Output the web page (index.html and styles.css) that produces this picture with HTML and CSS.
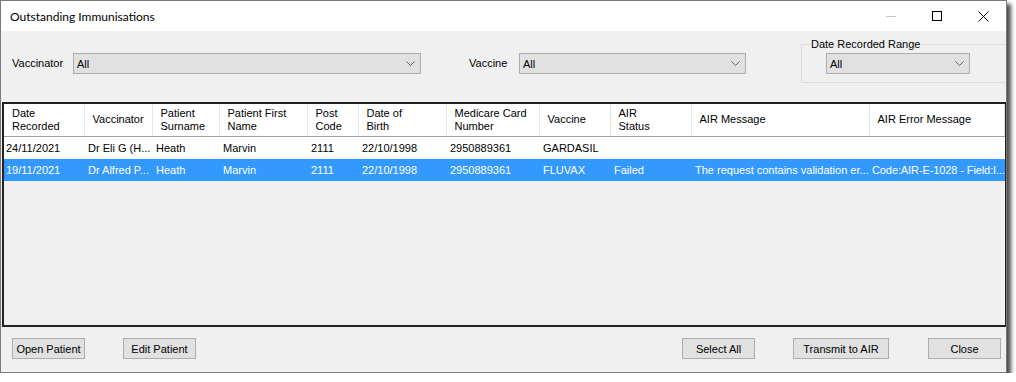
FILE: index.html
```html
<!DOCTYPE html>
<html lang="en">
<head>
    <meta charset="UTF-8">
    <title>Outstanding Immunisations</title>
    <link rel="stylesheet" href="styles.css">
</head>
<body>
    <div class="window">
        <div class="titlebar">
            <span class="title">Outstanding Immunisations</span>
            <div class="controls">
                <div class="ctl"><svg width="10" height="10" viewBox="0 0 10 10"><path d="M0 5.5H10" stroke="#c4c4c4" stroke-width="1"/></svg></div>
                <div class="ctl"><svg width="10" height="10" viewBox="0 0 10 10"><rect x="0.5" y="0.5" width="9" height="9" fill="none" stroke="#000" stroke-width="1"/></svg></div>
                <div class="ctl"><svg width="11" height="11" viewBox="0 0 11 11"><path d="M0.5 0.5L10.5 10.5M10.5 0.5L0.5 10.5" stroke="#000" stroke-width="1"/></svg></div>
            </div>
        </div>

        <div class="filters">
            <label class="lbl lbl-vaccinator">Vaccinator</label>
            <div class="combo combo-vaccinator">
                <span>All</span>
                <svg class="chev" width="9" height="5" viewBox="0 0 9 5"><path d="M0.5 0.5L4.5 4.5L8.5 0.5" fill="none" stroke="#606060"/></svg>
            </div>
            <label class="lbl lbl-vaccine">Vaccine</label>
            <div class="combo combo-vaccine">
                <span>All</span>
                <svg class="chev" width="9" height="5" viewBox="0 0 9 5"><path d="M0.5 0.5L4.5 4.5L8.5 0.5" fill="none" stroke="#606060"/></svg>
            </div>
            <fieldset class="range">
                <legend>Date Recorded Range</legend>
                <div class="combo combo-range">
                    <span>All</span>
                    <svg class="chev" width="9" height="5" viewBox="0 0 9 5"><path d="M0.5 0.5L4.5 4.5L8.5 0.5" fill="none" stroke="#606060"/></svg>
                </div>
            </fieldset>
        </div>

        <div class="grid">
            <table>
                <colgroup>
                    <col style="width:80px">
                    <col style="width:68px">
                    <col style="width:67px">
                    <col style="width:88px">
                    <col style="width:51px">
                    <col style="width:88px">
                    <col style="width:93px">
                    <col style="width:71px">
                    <col style="width:81px">
                    <col style="width:178px">
                    <col>
                </colgroup>
                <thead>
                    <tr>
                        <th>Date<br>Recorded</th>
                        <th>Vaccinator</th>
                        <th>Patient<br>Surname</th>
                        <th>Patient First<br>Name</th>
                        <th>Post<br>Code</th>
                        <th>Date of<br>Birth</th>
                        <th>Medicare Card<br>Number</th>
                        <th>Vaccine</th>
                        <th>AIR<br>Status</th>
                        <th>AIR Message</th>
                        <th>AIR Error Message</th>
                    </tr>
                </thead>
                <tbody>
                    <tr>
                        <td class="first">24/11/2021</td>
                        <td>Dr Eli G (H...</td>
                        <td>Heath</td>
                        <td>Marvin</td>
                        <td>2111</td>
                        <td>22/10/1998</td>
                        <td>2950889361</td>
                        <td>GARDASIL</td>
                        <td></td>
                        <td></td>
                        <td></td>
                    </tr>
                    <tr class="selected">
                        <td class="first">19/11/2021</td>
                        <td>Dr Alfred P...</td>
                        <td>Heath</td>
                        <td>Marvin</td>
                        <td>2111</td>
                        <td>22/10/1998</td>
                        <td>2950889361</td>
                        <td>FLUVAX</td>
                        <td>Failed</td>
                        <td>The request contains validation er...</td>
                        <td class="last">Code:AIR-E-1028 - Field:I...</td>
                    </tr>
                </tbody>
            </table>
        </div>

        <div class="footer">
            <button class="btn">Open Patient</button>
            <button class="btn edit">Edit Patient</button>
            <button class="btn select">Select All</button>
            <button class="btn transmit">Transmit to AIR</button>
            <button class="btn close">Close</button>
        </div>
    </div>
</body>
</html>
```

FILE: styles.css
```css
body {
    margin: 0;
    padding: 0;
    background: #fff;
    font-family: "Liberation Sans", Arial, sans-serif;
    font-size: 11px;
    color: #000;
}

.window {
    box-sizing: border-box;
    width: 1007px;
    height: 373px;
    border: 1px solid #7a7a7a;
    background: #f0f0f0;
    box-shadow: 4px 4px 4px rgba(0, 0, 0, 0.7);
    display: flex;
    flex-direction: column;
    overflow: hidden;
}

/* title bar */
.titlebar {
    height: 30px;
    flex: none;
    background: #fff;
    display: flex;
    align-items: center;
}
.title {
    padding-left: 9px;
    font-family: "Lato", "Noto Sans", sans-serif;
    font-size: 12px;
    color: #000;
}
.controls {
    margin-left: auto;
    display: flex;
    height: 100%;
}
.ctl {
    width: 46px;
    height: 30px;
    display: flex;
    align-items: center;
    justify-content: center;
}

/* filter row */
.filters {
    height: 71px;
    flex: none;
    display: flex;
    align-items: flex-start;
}
.filters > * {
    flex: none;
}
.lbl {
    margin-top: 22px;
    height: 21px;
    line-height: 21px;
}
.lbl-vaccinator {
    width: 61px;
    padding-left: 11px;
}
.lbl-vaccine {
    width: 50px;
    margin-left: 48px;
}
.combo {
    box-sizing: border-box;
    height: 21px;
    background: #e1e1e1;
    border: 1px solid #adadad;
    display: flex;
    align-items: center;
    padding: 0 5px 0 3px;
}
.combo span {
    flex: 1;
}
.combo .chev {
    flex: none;
}
.combo-vaccinator {
    width: 348px;
    margin-top: 22px;
}
.combo-vaccine {
    width: 227px;
    margin-top: 22px;
}
.range {
    margin: 7px 0 0 55px;
    padding: 0 0 6px 2px;
    width: 242px;
    height: 37px;
    border: 1px solid #dcdcdc;
    border-right: none;
}
.range legend {
    padding: 0 1px;
    margin-left: 6px;
    line-height: 13px;
    font-size: 11px;
}
.combo-range {
    width: 144px;
    margin: 2px 0 0 22px;
}

/* data grid */
.grid {
    flex: none;
    height: 225px;
    box-sizing: border-box;
    margin-left: 1px;
    border: 2px solid #222;
    border-right-width: 1px;
    background: #f0f0f0;
    overflow: hidden;
}
.grid table {
    border-collapse: collapse;
    table-layout: fixed;
    width: 100%;
}
.grid th {
    height: 32px;
    box-sizing: border-box;
    background: #fff;
    font-weight: normal;
    text-align: left;
    line-height: 13px;
    padding: 0 4px 0 8px;
    border-right: 1px solid #e5e5e5;
    border-bottom: 1px solid #a0a0a0;
    white-space: nowrap;
    overflow: hidden;
}
.grid td {
    height: 22px;
    padding: 0 2px 0 4px;
    background: #fff;
    white-space: nowrap;
    overflow: hidden;
}
.grid td.first {
    padding-left: 2px;
}
.grid td.last {
    padding: 0 0 0 3px;
    letter-spacing: -0.1px;
}
.grid tr.selected td {
    background: #3399ff;
    color: #fff;
}

/* bottom buttons */
.footer {
    flex: 1;
    display: flex;
    align-items: flex-start;
    padding: 11px 5px 0 11px;
}
.btn {
    box-sizing: border-box;
    width: 73px;
    height: 21px;
    background: #e1e1e1;
    border: 1px solid #adadad;
    font-family: "Liberation Sans", Arial, sans-serif;
    font-size: 11px;
    color: #000;
    padding: 0;
}
.btn.edit {
    margin-left: 38px;
}
.btn.select {
    margin-left: auto;
}
.btn.transmit {
    width: 96px;
    margin-left: 38px;
}
.btn.close {
    margin-left: 39px;
}
```
